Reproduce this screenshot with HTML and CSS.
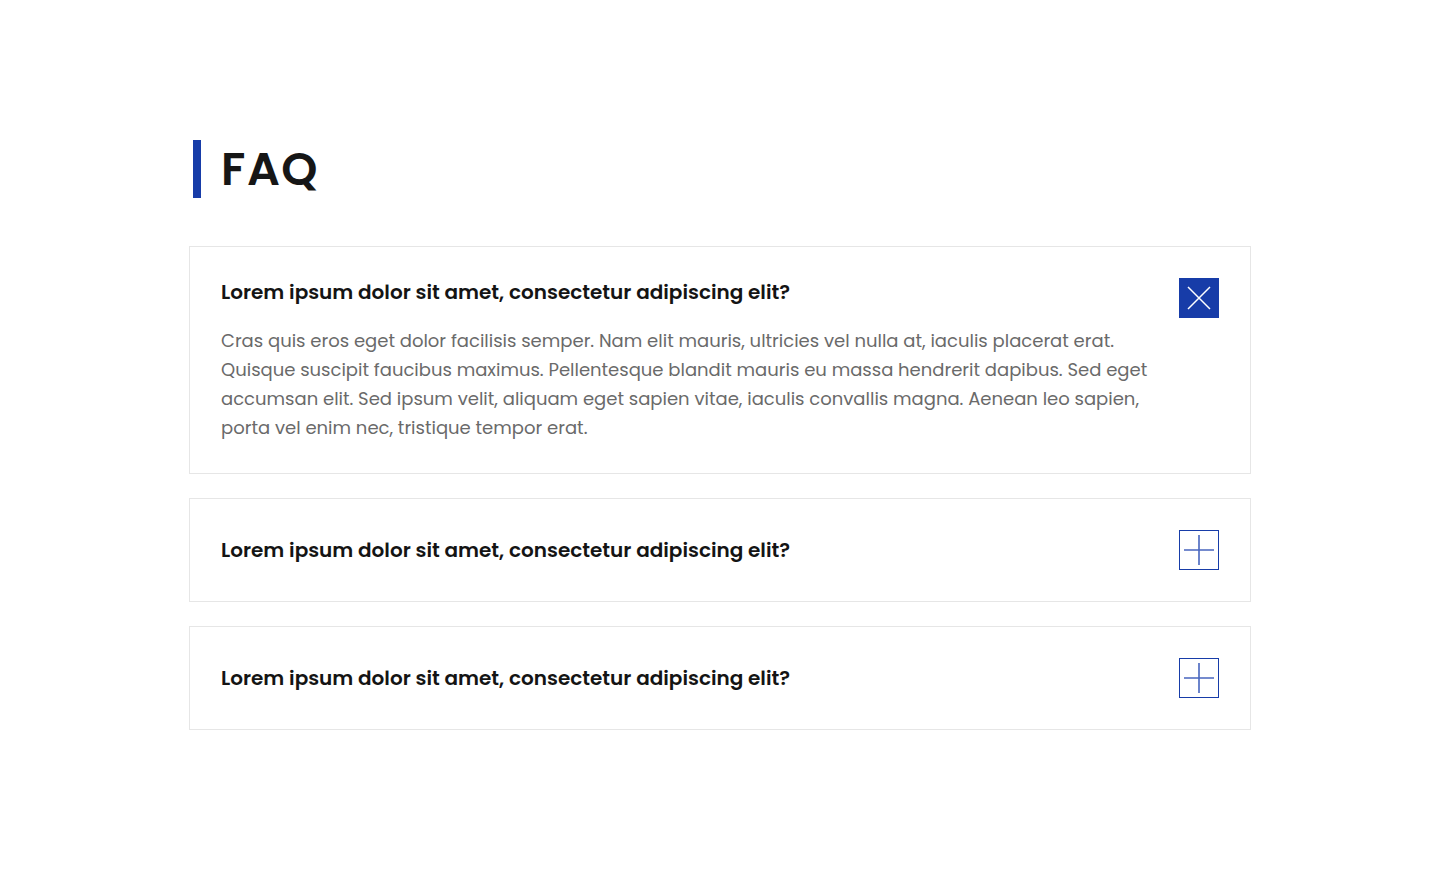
FILE: index.html
```html
<!DOCTYPE html>
<html lang="en">
<head>
<meta charset="utf-8">
<title>FAQ</title>
<link rel="stylesheet" href="styles.css">
</head>
<body>
<main class="faq">
  <h1 class="faq-title">FAQ</h1>
  <div class="faq-list">
    <div class="faq-item is-open">
      <div class="faq-content">
        <h2 class="faq-question">Lorem ipsum dolor sit amet, consectetur adipiscing elit?</h2>
        <p class="faq-answer">Cras quis eros eget dolor facilisis semper. Nam elit mauris, ultricies vel nulla at, iaculis placerat erat. Quisque suscipit faucibus maximus. Pellentesque blandit mauris eu massa hendrerit dapibus. Sed eget accumsan elit. Sed ipsum velit, aliquam eget sapien vitae, iaculis convallis magna. Aenean leo sapien, porta vel enim nec, tristique tempor erat.</p>
      </div>
      <button class="faq-toggle toggle-close" aria-label="Close">
        <svg width="40" height="40" viewBox="0 0 40 40"><path d="M9 9 L31 31 M31 9 L9 31" stroke="#fff" stroke-width="1.5" fill="none"/></svg>
      </button>
    </div>
    <div class="faq-item">
      <div class="faq-content">
        <h2 class="faq-question">Lorem ipsum dolor sit amet, consectetur adipiscing elit?</h2>
      </div>
      <button class="faq-toggle toggle-open" aria-label="Open">
        <svg width="38" height="38" viewBox="0 0 38 38"><path d="M4 19 H34 M19 4 V34" stroke="#4866bf" stroke-width="1.6" fill="none"/></svg>
      </button>
    </div>
    <div class="faq-item">
      <div class="faq-content">
        <h2 class="faq-question">Lorem ipsum dolor sit amet, consectetur adipiscing elit?</h2>
      </div>
      <button class="faq-toggle toggle-open" aria-label="Open">
        <svg width="38" height="38" viewBox="0 0 38 38"><path d="M4 19 H34 M19 4 V34" stroke="#4866bf" stroke-width="1.6" fill="none"/></svg>
      </button>
    </div>
  </div>
</main>
</body>
</html>
```
FILE: styles.css
```css
* { box-sizing: border-box; }
html, body { margin: 0; padding: 0; background: #fff; }
body { font-family: "Poppins", "Inter", "Open Sans", sans-serif; color: #141414; }

.faq {
  width: 1062px;
  margin: 0 0 0 189px;
  padding-top: 140px;
}

.faq-title {
  margin: 0 0 48px 4px;
  height: 58px;
  display: flex;
  align-items: center;
  border-left: 8px solid #173ca8;
  padding-left: 20px;
  font-size: 46px;
  font-weight: 600;
  letter-spacing: 1.5px;
  line-height: 58px;
  color: #161616;
}

.faq-list {
  display: flex;
  flex-direction: column;
  gap: 24px;
}

.faq-item {
  display: flex;
  align-items: center;
  gap: 24px;
  border: 1px solid #e6e6e6;
  padding: 31px;
}
.faq-item.is-open { align-items: flex-start; }

.faq-content { flex: 1; min-width: 0; }

.faq-question {
  margin: 0;
  font-size: 20px;
  line-height: 30px;
  font-weight: 600;
  color: #141414;
}
.is-open .faq-question { margin-top: -1px; }

.faq-answer {
  margin: 19px 0 0;
  font-size: 18px;
  line-height: 29px;
  color: #6a6a6a;
  font-weight: 400;
}

.faq-toggle {
  flex: none;
  width: 40px;
  height: 40px;
  padding: 0;
  margin: 0;
  border: 1px solid #173ca8;
  background: #fff;
  display: flex;
  align-items: center;
  justify-content: center;
  cursor: pointer;
}
.faq-toggle svg { display: block; }
.toggle-close { background: #173ca8; border: none; }
```
